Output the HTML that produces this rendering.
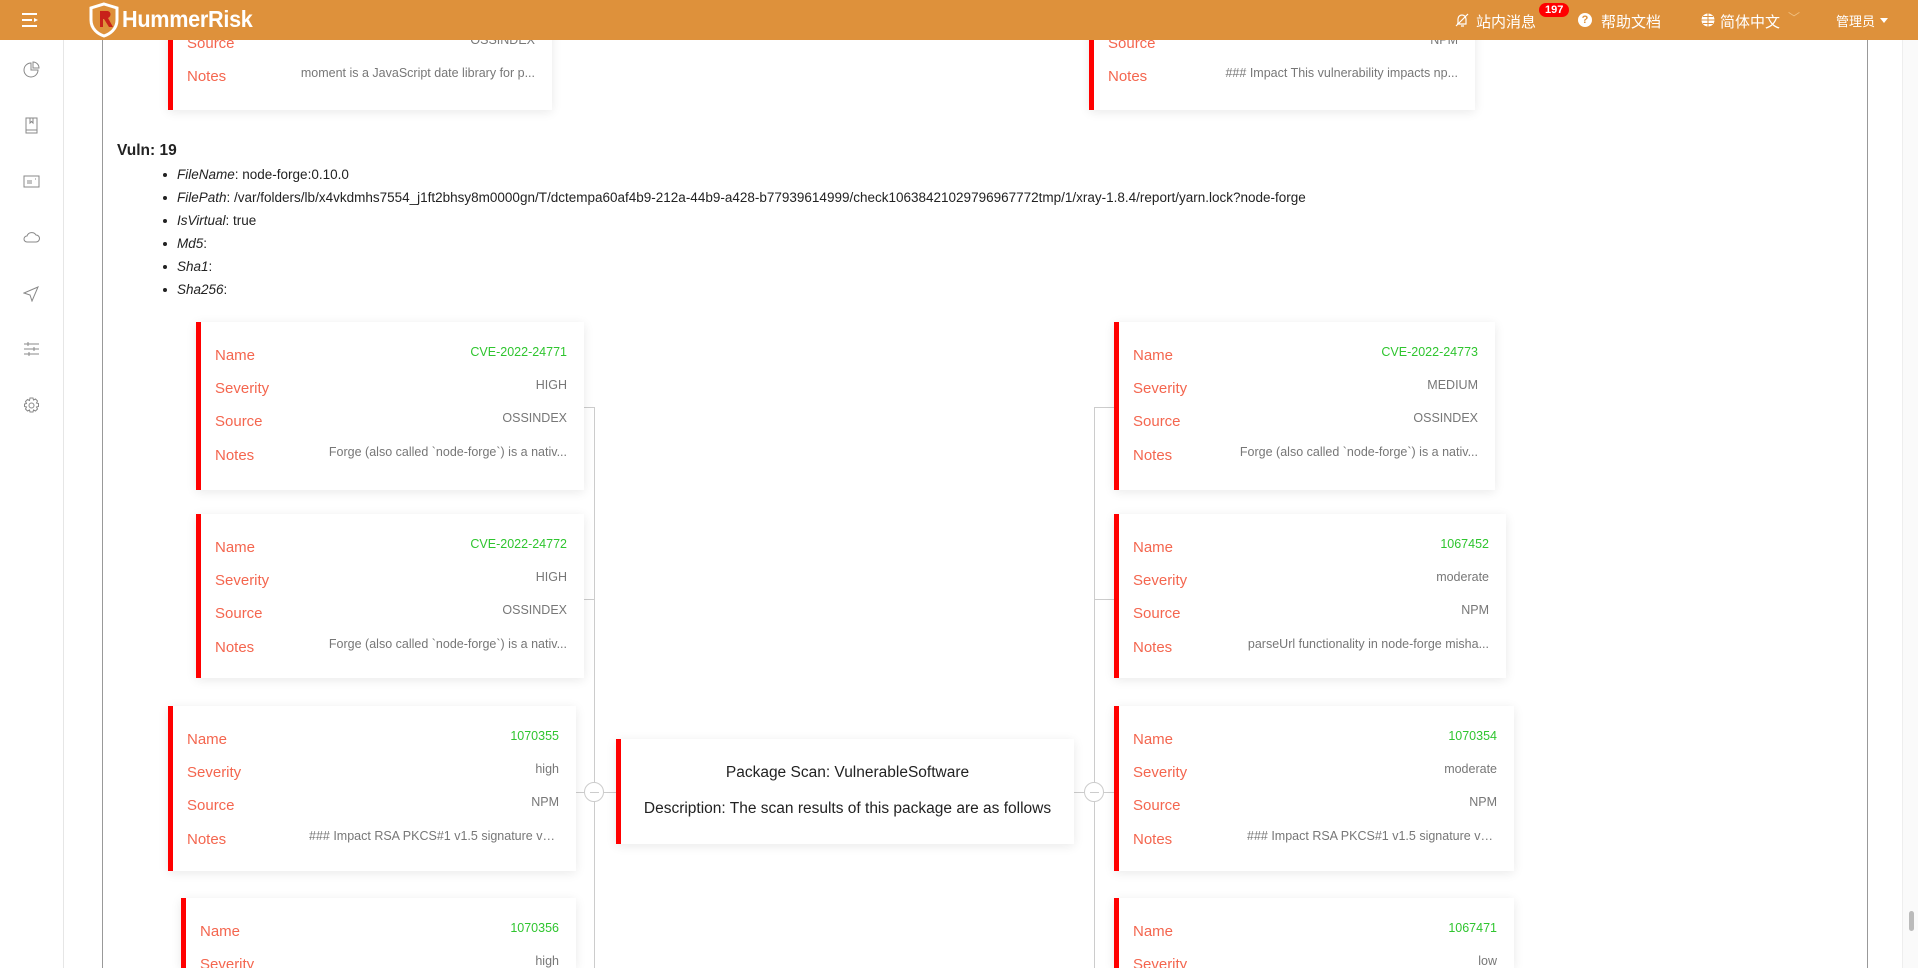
<!DOCTYPE html>
<html style="width:1918px;height:968px;overflow:hidden"><head><meta charset="utf-8"><style>
*{box-sizing:border-box;margin:0;padding:0}
body{width:1918px;height:968px;overflow:hidden;background:#fff;font-family:"Liberation Sans","Noto Sans CJK SC",sans-serif;position:relative}
.hdr{position:absolute;left:0;top:0;width:1918px;height:40px;background:#de913b;color:#fff;z-index:10}
.side{position:absolute;left:0;top:40px;width:64px;height:928px;border-right:1px solid #e6e6e6;background:#fff}
.side svg{position:absolute;left:23px}
.card{position:absolute;background:#fff;box-shadow:0 2px 10px rgba(0,0,0,.09);border-left:5px solid #f00}
.row{position:absolute;left:0;right:0;height:20px}
.lb{position:absolute;left:14px;color:#f4664f;font-size:15px;top:1px}
.vl{position:absolute;right:17px;color:#777;font-size:12.5px;top:-1px;max-width:250px;white-space:nowrap;overflow:hidden;text-overflow:ellipsis}
.g{color:#2fc52f}
.ln{position:absolute;background:#ccc}
.circ{position:absolute;width:20px;height:20px;border:1px solid #ccc;border-radius:50%;background:#fff}
.circ:after{content:"";position:absolute;left:5px;top:9px;width:9px;height:1px;background:#ccc}
ul{position:absolute;left:163px;top:166px;list-style:none;font-size:13.5px;color:#222}
li{height:23px;line-height:18px;position:relative;padding-left:14px}
li:before{content:"";position:absolute;left:0;top:7px;width:4px;height:4px;border-radius:50%;background:#222}
</style></head><body>
<div class="hdr">
<svg style="position:absolute;left:22px;top:13px" width="17" height="14" viewBox="0 0 17 14"><path d="M0 1h15M0 7h10M0 13h15" stroke="#fff" stroke-width="2"/><path d="M12 5l4 2-4 2z" fill="#fff"/></svg>
<svg style="position:absolute;left:88px;top:2px" width="32" height="36" viewBox="0 0 32 36"><path d="M16 2l13 4v12c0 9-7 14-13 16C10 32 3 27 3 18V6z" fill="none" stroke="#fff" stroke-width="3"/><path d="M12 9h7c4 0 5 5 1 7l5 9h-4l-5-8h-1v8h-3z" fill="#c8221a"/></svg>
<div style="position:absolute;left:122px;top:6px;font-size:23px;font-weight:bold;letter-spacing:-0.3px;transform:scaleX(.94);transform-origin:left">HummerRisk</div>
<svg style="position:absolute;left:1455px;top:13px" width="14" height="14" viewBox="0 0 14 14"><path d="M3 11V6a4 4 0 018 0v5H2M1 13L13 1M6 13h3" fill="none" stroke="#fff" stroke-width="1.2"/></svg>
<div style="position:absolute;left:1476px;top:11px;font-size:15px">站内消息</div>
<div style="position:absolute;left:1539px;top:3px;background:#f00;border-radius:9px;font-size:11px;font-weight:bold;padding:1px 6px">197</div>
<div style="position:absolute;left:1578px;top:13px;width:14px;height:14px;border-radius:50%;background:#fff;color:#de913b;font-size:11px;font-weight:bold;text-align:center;line-height:14px">?</div>
<div style="position:absolute;left:1601px;top:11px;font-size:15px">帮助文档</div>
<svg style="position:absolute;left:1701px;top:13px" width="14" height="14" viewBox="0 0 14 14"><circle cx="7" cy="7" r="6.5" fill="#fff"/><path d="M0 7h14M7 0v14M2 3.5h10M2 10.5h10" stroke="#de913b" stroke-width="1"/></svg>
<div style="position:absolute;left:1720px;top:11px;font-size:15px">简体中文</div>
<div style="position:absolute;left:1788px;top:9px;font-size:12px;color:#f0c080">﹀</div>
<div style="position:absolute;left:1836px;top:11px;font-size:13px">管理员</div>
<div style="position:absolute;left:1880px;top:18px;border:4px solid transparent;border-top:5px solid #fff"></div>
</div>
<div class="side">
<svg style="top:21px" width="17" height="17" viewBox="0 0 17 17" fill="none" stroke="#888" stroke-width="1"><path d="M8 2a7 7 0 107 7H8z"/><path d="M10 1v6h6a6 6 0 00-6-6z"/></svg>
<svg style="top:77px" width="17" height="17" viewBox="0 0 17 17" fill="none" stroke="#888" stroke-width="1"><path d="M3 1h11v15H3zM3 13h11M7 1v5l1.5-1.5L10 6V1"/></svg>
<svg style="top:133px" width="17" height="17" viewBox="0 0 17 17" fill="none" stroke="#888" stroke-width="1"><path d="M1 3h15v11H1zM4 8h5M4 10h5M12 6h1"/></svg>
<svg style="top:189px" width="17" height="17" viewBox="0 0 17 17" fill="none" stroke="#888" stroke-width="1"><path d="M4 13a3 3 0 010-6 5 5 0 019-1 3.5 3.5 0 010 7z"/></svg>
<svg style="top:245px" width="17" height="17" viewBox="0 0 17 17" fill="none" stroke="#888" stroke-width="1"><path d="M15 2L1 8l6 2 2 6z"/></svg>
<svg style="top:301px" width="17" height="17" viewBox="0 0 17 17" fill="none" stroke="#888" stroke-width="1"><path d="M1 3h15M1 8h15M1 13h15M5 1v4M11 6v4M6 11v4"/></svg>
<svg style="top:357px" width="17" height="17" viewBox="0 0 17 17" fill="none" stroke="#888" stroke-width="1"><circle cx="8.5" cy="8.5" r="2.5"/><path d="M7 1h3l.5 2 2-1 2 2-1 2 2 .5v3l-2 .5 1 2-2 2-2-1-.5 2H7l-.5-2-2 1-2-2 1-2-2-.5V7l2-.5-1-2 2-2 2 1z"/></svg>
</div>
<div style="position:absolute;left:102px;top:40px;width:1px;height:928px;background:#999"></div>
<div style="position:absolute;left:1867px;top:40px;width:1px;height:928px;background:#999"></div>
<div style="position:absolute;left:1902px;top:40px;width:16px;height:928px;background:#fafafa;border-left:1px solid #eee"></div>
<div style="position:absolute;left:1909px;top:911px;width:5px;height:20px;background:#bbb;border-radius:3px"></div>

<div class="card" style="left:168px;top:0;width:384px;height:110px">
<div class="row" style="top:34px"><span class="lb">Source</span><span class="vl">OSSINDEX</span></div>
<div class="row" style="top:67px"><span class="lb">Notes</span><span class="vl">moment is a JavaScript date library for p...</span></div></div>
<div class="card" style="left:1089px;top:0;width:386px;height:110px">
<div class="row" style="top:34px"><span class="lb">Source</span><span class="vl">NPM</span></div>
<div class="row" style="top:67px"><span class="lb">Notes</span><span class="vl">### Impact This vulnerability impacts np...</span></div></div>

<div style="position:absolute;left:117px;top:142px;font-size:15.5px;font-weight:bold;color:#222">Vuln: 19</div>
<ul>
<li><i>FileName</i>: node-forge:0.10.0</li>
<li><i>FilePath</i>: /var/folders/lb/x4vkdmhs7554_j1ft2bhsy8m0000gn/T/dctempa60af4b9-212a-44b9-a428-b77939614999/check10638421029796967772tmp/1/xray-1.8.4/report/yarn.lock?node-forge</li>
<li><i>IsVirtual</i>: true</li>
<li><i>Md5</i>:</li>
<li><i>Sha1</i>:</li>
<li><i>Sha256</i>:</li>
</ul>

<div class="ln" style="left:594px;top:407px;width:1px;height:561px"></div>
<div class="ln" style="left:584px;top:407px;width:10px;height:1px"></div>
<div class="ln" style="left:584px;top:599px;width:10px;height:1px"></div>
<div class="ln" style="left:576px;top:792px;width:40px;height:1px"></div>
<div class="circ" style="left:584px;top:782px"></div>
<div class="ln" style="left:1094px;top:407px;width:1px;height:561px"></div>
<div class="ln" style="left:1094px;top:407px;width:20px;height:1px"></div>
<div class="ln" style="left:1094px;top:599px;width:20px;height:1px"></div>
<div class="ln" style="left:1074px;top:792px;width:40px;height:1px"></div>
<div class="circ" style="left:1084px;top:782px"></div>

<div class="card" style="left:196px;top:322px;width:388px;height:168px">
<div class="row" style="top:24px"><span class="lb">Name</span><span class="vl g">CVE-2022-24771</span></div>
<div class="row" style="top:57px"><span class="lb">Severity</span><span class="vl">HIGH</span></div>
<div class="row" style="top:90px"><span class="lb">Source</span><span class="vl">OSSINDEX</span></div>
<div class="row" style="top:124px"><span class="lb">Notes</span><span class="vl">Forge (also called `node-forge`) is a nativ...</span></div></div>
<div class="card" style="left:196px;top:514px;width:388px;height:164px">
<div class="row" style="top:24px"><span class="lb">Name</span><span class="vl g">CVE-2022-24772</span></div>
<div class="row" style="top:57px"><span class="lb">Severity</span><span class="vl">HIGH</span></div>
<div class="row" style="top:90px"><span class="lb">Source</span><span class="vl">OSSINDEX</span></div>
<div class="row" style="top:124px"><span class="lb">Notes</span><span class="vl">Forge (also called `node-forge`) is a nativ...</span></div></div>
<div class="card" style="left:168px;top:706px;width:408px;height:165px">
<div class="row" style="top:24px"><span class="lb">Name</span><span class="vl g">1070355</span></div>
<div class="row" style="top:57px"><span class="lb">Severity</span><span class="vl">high</span></div>
<div class="row" style="top:90px"><span class="lb">Source</span><span class="vl">NPM</span></div>
<div class="row" style="top:124px"><span class="lb">Notes</span><span class="vl">### Impact RSA PKCS#1 v1.5 signature ver...</span></div></div>
<div class="card" style="left:181px;top:898px;width:395px;height:70px">
<div class="row" style="top:24px"><span class="lb">Name</span><span class="vl g">1070356</span></div>
<div class="row" style="top:57px"><span class="lb">Severity</span><span class="vl">high</span></div></div>

<div class="card" style="left:1114px;top:322px;width:381px;height:168px">
<div class="row" style="top:24px"><span class="lb">Name</span><span class="vl g">CVE-2022-24773</span></div>
<div class="row" style="top:57px"><span class="lb">Severity</span><span class="vl">MEDIUM</span></div>
<div class="row" style="top:90px"><span class="lb">Source</span><span class="vl">OSSINDEX</span></div>
<div class="row" style="top:124px"><span class="lb">Notes</span><span class="vl">Forge (also called `node-forge`) is a nativ...</span></div></div>
<div class="card" style="left:1114px;top:514px;width:392px;height:164px">
<div class="row" style="top:24px"><span class="lb">Name</span><span class="vl g">1067452</span></div>
<div class="row" style="top:57px"><span class="lb">Severity</span><span class="vl">moderate</span></div>
<div class="row" style="top:90px"><span class="lb">Source</span><span class="vl">NPM</span></div>
<div class="row" style="top:124px"><span class="lb">Notes</span><span class="vl">parseUrl functionality in node-forge misha...</span></div></div>
<div class="card" style="left:1114px;top:706px;width:400px;height:165px">
<div class="row" style="top:24px"><span class="lb">Name</span><span class="vl g">1070354</span></div>
<div class="row" style="top:57px"><span class="lb">Severity</span><span class="vl">moderate</span></div>
<div class="row" style="top:90px"><span class="lb">Source</span><span class="vl">NPM</span></div>
<div class="row" style="top:124px"><span class="lb">Notes</span><span class="vl">### Impact RSA PKCS#1 v1.5 signature ve...</span></div></div>
<div class="card" style="left:1114px;top:898px;width:400px;height:70px">
<div class="row" style="top:24px"><span class="lb">Name</span><span class="vl g">1067471</span></div>
<div class="row" style="top:57px"><span class="lb">Severity</span><span class="vl">low</span></div></div>

<div class="card" style="left:616px;top:739px;width:458px;height:105px;text-align:center;color:#222;font-size:15.5px">
<div style="position:absolute;left:0;right:0;top:25px">Package Scan: VulnerableSoftware</div>
<div style="position:absolute;left:0;right:0;top:61px">Description: The scan results of this package are as follows</div></div>
</body></html>
